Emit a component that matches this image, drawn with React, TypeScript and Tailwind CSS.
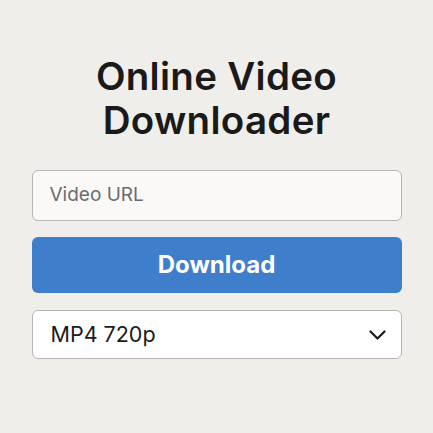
import React from "react";

export default function App() {
  return (
    <div className="w-[433px] h-[433px] bg-[#efeeeb] flex flex-col items-center" style={{ fontFamily: "Inter, 'Noto Sans', sans-serif" }}>
      <h1 className="mt-[54px] text-[38.5px] leading-[44px] font-semibold text-[#1a1a1a] text-center tracking-[0.3px]">
        Online Video
        <br />
        Downloader
      </h1>
      <div className="w-[370px] mt-[28px] flex flex-col">
        <div className="h-[51px] rounded-[6px] border border-[#b8b6b2] bg-[#faf9f7] flex items-center px-[17px]">
          <span className="text-[19px] text-[#6b6b70]">Video URL</span>
        </div>
        <div className="mt-[16px] h-[56px] rounded-[6px] bg-[#3f7ecb] flex items-center justify-center">
          <span className="text-[24px] font-bold text-white">Download</span>
        </div>
        <div className="mt-[17px] h-[49px] rounded-[6px] border border-[#b8b6b2] bg-white flex items-center justify-between pl-[18px] pr-[15px]">
          <span className="text-[21.5px] text-[#1a1a1a]">MP4 720p</span>
          <svg width="17" height="10" viewBox="0 0 17 10" fill="none" stroke="#1a1a1a" strokeWidth="2.2" strokeLinecap="round" strokeLinejoin="round">
            <path d="M1.5 1.5l7 7 7-7" />
          </svg>
        </div>
      </div>
    </div>
  );
}
